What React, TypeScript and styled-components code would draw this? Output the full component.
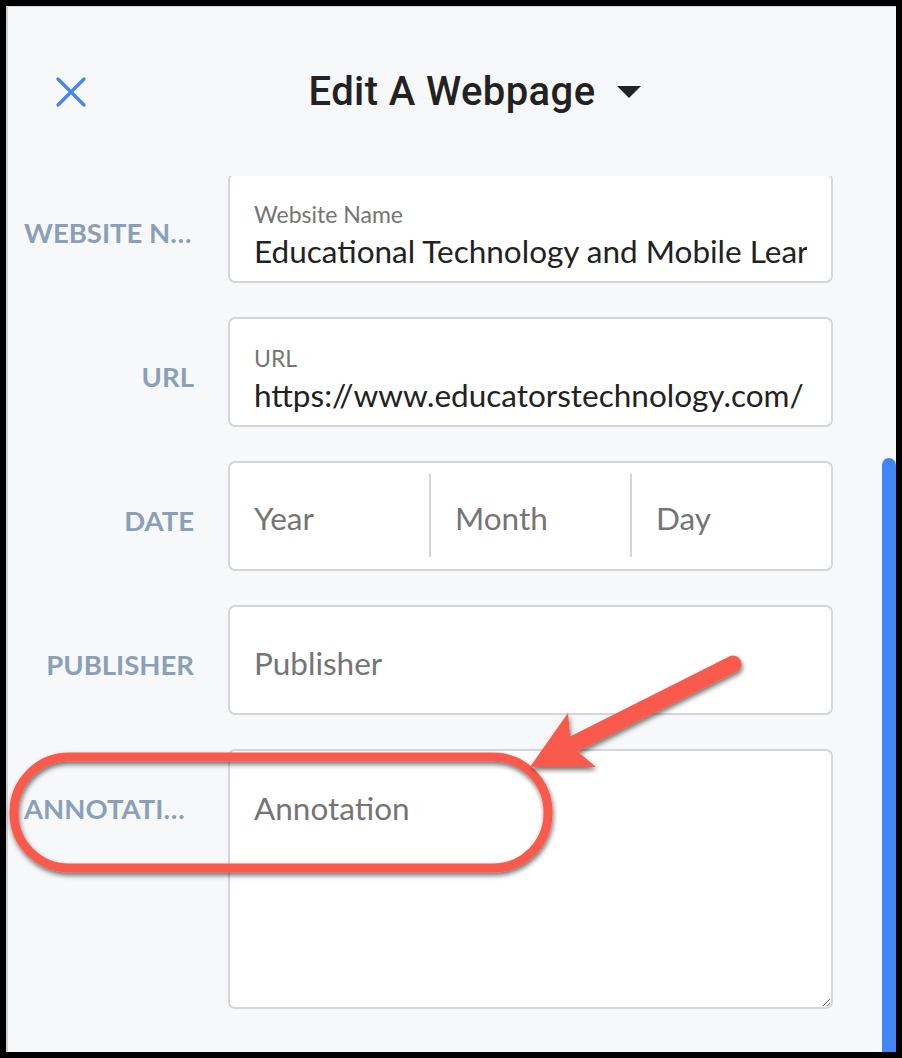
import React from 'react';
import styled, { createGlobalStyle } from 'styled-components';

const GlobalStyle = createGlobalStyle`
  html, body {
    margin: 0;
    padding: 0;
    background: #000;
  }
  body {
    width: 902px;
    height: 1058px;
    overflow: hidden;
  }
`;

const Frame = styled.div`
  position: relative;
  box-sizing: border-box;
  width: 902px;
  height: 1058px;
  padding: 6px;
  background: #000;
`;

const Panel = styled.div`
  box-sizing: border-box;
  height: 100%;
  display: flex;
  flex-direction: column;
  background: #f7f8fa;
  border-top: 1px solid #d9d9d9;
  border-left: 2px solid #cfcfcf;
  font-family: Lato, "Noto Sans", sans-serif;
`;

const Header = styled.div`
  height: 169px;
  flex-shrink: 0;
  display: grid;
  grid-template-columns: 1fr auto 1fr;
  align-items: center;
`;

const CloseButton = styled.button`
  justify-self: start;
  margin-left: 48px;
  padding: 0;
  border: none;
  background: transparent;
  display: flex;
  cursor: pointer;
`;

const Title = styled.h1`
  margin: 0;
  font-family: Roboto, "Liberation Sans", sans-serif;
  font-weight: 500;
  font-size: 40px;
  color: #222;
  letter-spacing: 0.4px;
`;

const Caret = styled.span`
  justify-self: start;
  margin-left: 22px;
  display: flex;
`;

const Body = styled.div`
  flex: 1;
  min-height: 0;
  display: flex;
`;

const ScrollContent = styled.div`
  flex: 1;
  overflow: hidden;
`;

const ScrollTrack = styled.div`
  width: 14px;
  display: flex;
  flex-direction: column;
`;

const ScrollThumb = styled.div`
  flex: 1;
  margin-top: 282px;
  background: #4285f4;
  border-radius: 7px 7px 0 0;
`;

const Form = styled.div`
  margin-top: -3px;
  padding-left: 16px;
  display: flex;
  flex-direction: column;
  gap: 34px;
`;

const Row = styled.div`
  display: grid;
  grid-template-columns: 170px 605px;
  column-gap: 34px;
  align-items: start;
`;

const FieldLabel = styled.label`
  display: block;
  height: 110px;
  line-height: 120px;
  text-align: right;
  font-weight: 700;
  font-size: 27.5px;
  text-transform: uppercase;
  color: #8aa0b8;
  white-space: nowrap;
  overflow: hidden;
  text-overflow: ellipsis;
`;

const Box = styled.div`
  box-sizing: border-box;
  height: 110px;
  background: #fff;
  border: 2px solid #d4d6d9;
  border-radius: 7px;
  display: flex;
  flex-direction: column;
  justify-content: center;
  padding: 5px 24px 0;
`;

const DateBox = styled(Box)`
  flex-direction: row;
  padding: 0;
`;

const DatePart = styled.div<{ $divider?: boolean }>`
  flex: 1;
  display: flex;
  align-items: center;
  margin: 11px 0 12px;
  padding: 5px 24px 0;
  border-left: ${p => (p.$divider ? '2px solid #d4d6d9' : 'none')};
`;

const SmallCaption = styled.span`
  font-size: 23px;
  line-height: 26px;
  color: #757575;
  margin-top: 10px;
`;

const TextInput = styled.input<{ $spaced?: boolean }>`
  box-sizing: border-box;
  width: 100%;
  height: 38px;
  margin: ${p => (p.$spaced ? '5px 0 0' : '0')};
  padding: 0;
  border: none;
  outline: none;
  background: transparent;
  font-family: Lato, "Noto Sans", sans-serif;
  font-size: 31.5px;
  line-height: 38px;
  color: #222;

  &::placeholder {
    color: #757575;
    opacity: 1;
  }
`;

const AnnotationArea = styled.textarea`
  box-sizing: border-box;
  display: block;
  width: 605px;
  height: 260px;
  margin: 0;
  padding: 38px 24px;
  border: 2px solid #d4d6d9;
  border-radius: 7px;
  background: #fff;
  outline: none;
  resize: vertical;
  font-family: Lato, "Noto Sans", sans-serif;
  font-size: 31.5px;
  line-height: 38px;
  color: #222;

  &::placeholder {
    color: #757575;
    opacity: 1;
  }
`;

const Callout = styled.svg`
  position: absolute;
  left: 0;
  top: 0;
  pointer-events: none;
`;

const RED = '#f95a4b';

export default function App() {
  return (
    <Frame>
      <GlobalStyle />
      <Panel>
        <Header>
          <CloseButton aria-label="Close">
            <svg width="30" height="30" viewBox="0 0 30 30">
              <path d="M2 2 L28 28 M28 2 L2 28" stroke="#4285f4" strokeWidth="3.2" strokeLinecap="round" />
            </svg>
          </CloseButton>
          <Title>Edit A Webpage</Title>
          <Caret>
            <svg width="24" height="12" viewBox="0 0 24 12">
              <polygon points="0,0 24,0 12,12" fill="#222" />
            </svg>
          </Caret>
        </Header>
        <Body>
          <ScrollContent>
            <Form>
              <Row>
                <FieldLabel>Website Name</FieldLabel>
                <Box>
                  <SmallCaption>Website Name</SmallCaption>
                  <TextInput $spaced readOnly value="Educational Technology and Mobile Learning" />
                </Box>
              </Row>
              <Row>
                <FieldLabel>URL</FieldLabel>
                <Box>
                  <SmallCaption>URL</SmallCaption>
                  <TextInput $spaced readOnly value="https://www.educatorstechnology.com/" />
                </Box>
              </Row>
              <Row>
                <FieldLabel>Date</FieldLabel>
                <DateBox>
                  <DatePart>
                    <TextInput placeholder="Year" />
                  </DatePart>
                  <DatePart $divider>
                    <TextInput placeholder="Month" />
                  </DatePart>
                  <DatePart $divider>
                    <TextInput placeholder="Day" />
                  </DatePart>
                </DateBox>
              </Row>
              <Row>
                <FieldLabel>Publisher</FieldLabel>
                <Box>
                  <TextInput placeholder="Publisher" />
                </Box>
              </Row>
              <Row>
                <FieldLabel>Annotation</FieldLabel>
                <AnnotationArea placeholder="Annotation" />
              </Row>
            </Form>
          </ScrollContent>
          <ScrollTrack>
            <ScrollThumb />
          </ScrollTrack>
        </Body>
      </Panel>

      <Callout width="902" height="1058" viewBox="0 0 902 1058">
        <defs>
          <filter id="shade" x="-10%" y="-10%" width="120%" height="130%">
            <feDropShadow dx="1" dy="3" stdDeviation="2.5" floodColor="#000" floodOpacity="0.55" />
          </filter>
        </defs>
        <g filter="url(#shade)">
          <rect x="14" y="757" width="534" height="111" rx="55" fill="none" stroke={RED} strokeWidth="9" />
        </g>
        <g filter="url(#shade)">
          <line x1="566" y1="748" x2="733" y2="664" stroke={RED} strokeWidth="17" strokeLinecap="round" />
          <polygon points="530,767 568,713 571,746 596,767" fill={RED} />
        </g>
      </Callout>
    </Frame>
  );
}
